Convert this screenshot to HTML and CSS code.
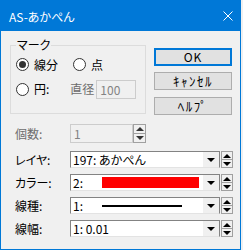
FILE: index.html
```html
<!DOCTYPE html>
<html lang="ja">
<head>
    <meta charset="UTF-8">
    <title>AS-あかぺん</title>
    <link rel="stylesheet" href="styles.css">
</head>
<body>
    <div class="window">
        <div class="titlebar">
            <span class="title">AS-あかぺん</span>
            <svg class="close" width="10" height="10" viewBox="0 0 10 10">
                <path d="M0.5 0.5 L9.5 9.5 M9.5 0.5 L0.5 9.5" stroke="#fff" stroke-width="1"/>
            </svg>
        </div>

        <div class="client">
            <div class="top">
                <!-- Mark group -->
                <fieldset class="group">
                    <legend>マーク</legend>
                    <div class="opt-row first">
                        <label class="radio checked"><span class="dot"></span>線分</label>
                        <label class="radio second"><span class="dot"></span>点</label>
                    </div>
                    <div class="opt-row">
                        <label class="radio"><span class="dot"></span>円:</label>
                        <span class="caption disabled">直径</span>
                        <span class="field disabled diameter">100</span>
                    </div>
                </fieldset>

                <div class="buttons">
                    <div class="btn default">OK</div>
                    <div class="btn kana">ｷｬﾝｾﾙ</div>
                    <div class="btn kana help">ﾍﾙﾌﾟ</div>
                </div>
            </div>

            <div class="rows">
                <div class="row count">
                    <span class="label disabled">個数:</span>
                    <span class="field disabled amount">1</span>
                    <div class="spin">
                        <span class="up"></span>
                        <span class="down"></span>
                    </div>
                </div>

                <div class="row">
                    <span class="label">レイヤ:</span>
                    <div class="combo">
                        <span class="value">197: あかぺん</span>
                        <span class="drop"></span>
                    </div>
                    <div class="spin">
                        <span class="up"></span>
                        <span class="down"></span>
                    </div>
                </div>

                <div class="row">
                    <span class="label">カラー:</span>
                    <div class="combo">
                        <span class="num">2:</span>
                        <span class="swatch"></span>
                        <span class="drop"></span>
                    </div>
                    <div class="spin">
                        <span class="up"></span>
                        <span class="down"></span>
                    </div>
                </div>

                <div class="row">
                    <span class="label">線種:</span>
                    <div class="combo">
                        <span class="num">1:</span>
                        <span class="line-sample"></span>
                        <span class="drop"></span>
                    </div>
                    <div class="spin">
                        <span class="up"></span>
                        <span class="down"></span>
                    </div>
                </div>

                <div class="row">
                    <span class="label">線幅:</span>
                    <div class="combo">
                        <span class="value">1: 0.01</span>
                        <span class="drop"></span>
                    </div>
                    <div class="spin">
                        <span class="up"></span>
                        <span class="down"></span>
                    </div>
                </div>
            </div>
        </div>
    </div>
</body>
</html>
```

FILE: styles.css
```css
:root {
    --face: #f0f0f0;
    --title: #0078d7;
    --text: #000000;
    --grey-text: #6d6d6d;
    --frame: #adadad;
    --sunken: #7a7a7a;
}

* {
    margin: 0;
    padding: 0;
    box-sizing: border-box;
}

body {
    font-family: "Noto Sans CJK JP", "Noto Sans", sans-serif;
    font-size: 12px;
    line-height: 14px;
    font-feature-settings: "palt";
    color: var(--text);
    background-color: var(--face);
}

.window {
    width: 241px;
    height: 250px;
    border: 1px solid var(--title);
    border-top: none;
    background-color: var(--face);
    display: flex;
    flex-direction: column;
}

.titlebar {
    height: 31px;
    background-color: var(--title);
    color: #fff;
    display: flex;
    align-items: center;
    padding: 2px 7px 0 8px;
}

.close {
    margin-left: auto;
    margin-top: -2px;
}

.client {
    padding: 7px 0 0 9px;
}

.top {
    display: flex;
    align-items: flex-start;
}

/* group box */
.group {
    width: 136px;
    border: 1px solid #dcdcdc;
    padding: 5px 0 14px 5px;
}

.group legend {
    padding: 0 1px;
}

.opt-row {
    display: flex;
    align-items: center;
    height: 20px;
}

.opt-row.first {
    height: 15px;
    margin-bottom: 7px;
}

.radio {
    display: flex;
    align-items: center;
    gap: 5px;
}

.radio.second {
    margin-left: 15px;
}

.dot {
    width: 13px;
    height: 13px;
    border: 1px solid #333;
    border-radius: 50%;
    background-color: #fff;
    display: flex;
    align-items: center;
    justify-content: center;
}

.radio.checked .dot::after {
    content: "";
    width: 7px;
    height: 7px;
    border-radius: 50%;
    background-color: #333;
}

.caption {
    margin-left: 21px;
}

.disabled {
    color: var(--grey-text);
}

.field {
    height: 19px;
    border: 1px solid #cccccc;
    background-color: var(--face);
    padding: 2px 3px 0;
    color: #838383;
}

.field.diameter {
    width: 40px;
    margin-left: 2px;
}

/* buttons */
.buttons {
    width: 78px;
    margin: 10px 0 0 8px;
    display: flex;
    flex-direction: column;
    gap: 6px;
}

.btn {
    height: 18px;
    border: 1px solid var(--frame);
    background-color: #e1e1e1;
    text-align: center;
    line-height: 16px;
    letter-spacing: 1px;
}

.btn.kana {
    font-feature-settings: normal;
    font-size: 13px;
    letter-spacing: 1.5px;
}

.btn.default {
    border: 2px solid var(--title);
    line-height: 14px;
}

.btn.help {
    margin-top: 1px;
}

/* rows */
.rows {
    margin-top: 9px;
    display: flex;
    flex-direction: column;
    gap: 6px;
}

.row {
    display: flex;
    align-items: stretch;
    height: 17px;
}

.row.count {
    height: 19px;
    margin-bottom: 2px;
}

.label {
    width: 60px;
    padding-left: 5px;
    align-self: center;
}

.field.amount {
    width: 63px;
}

.combo {
    width: 150px;
    border: 1px solid #838383;
    border-bottom-color: #e3e3e3;
    background-color: #fff;
    display: flex;
    align-items: center;
}

.combo .value {
    flex: 1;
    padding-left: 2px;
}

.combo .num {
    width: 31px;
    padding-left: 2px;
}

.swatch {
    width: 97px;
    height: 11px;
    background-color: #ff0000;
}

.line-sample {
    width: 80px;
    height: 2px;
    background-color: #000;
}

.drop {
    width: 16px;
    height: 100%;
    margin-left: auto;
    background-color: var(--face);
    display: flex;
    align-items: center;
    justify-content: center;
}

.drop::after {
    content: "";
    border-left: 4px solid transparent;
    border-right: 4px solid transparent;
    border-top: 4px solid #000;
}

.spin {
    width: 13px;
    margin-left: 1px;
    display: flex;
    flex-direction: column;
}

.row .spin {
    width: 12px;
}

.row.count .spin {
    width: 13px;
    margin-left: 0;
}

.spin span {
    flex: 1;
    border: 1px solid #a0a0a0;
    background-color: var(--face);
    display: flex;
    align-items: center;
    justify-content: center;
}

.spin .down {
    border-top: none;
}

.spin .up::after {
    content: "";
    border-left: 4px solid transparent;
    border-right: 4px solid transparent;
    border-bottom: 4px solid #000;
}

.spin .down::after {
    content: "";
    border-left: 4px solid transparent;
    border-right: 4px solid transparent;
    border-top: 4px solid #000;
}

.row.count .spin span::after {
    border-top-color: #333;
    border-bottom-color: #333;
}
```
